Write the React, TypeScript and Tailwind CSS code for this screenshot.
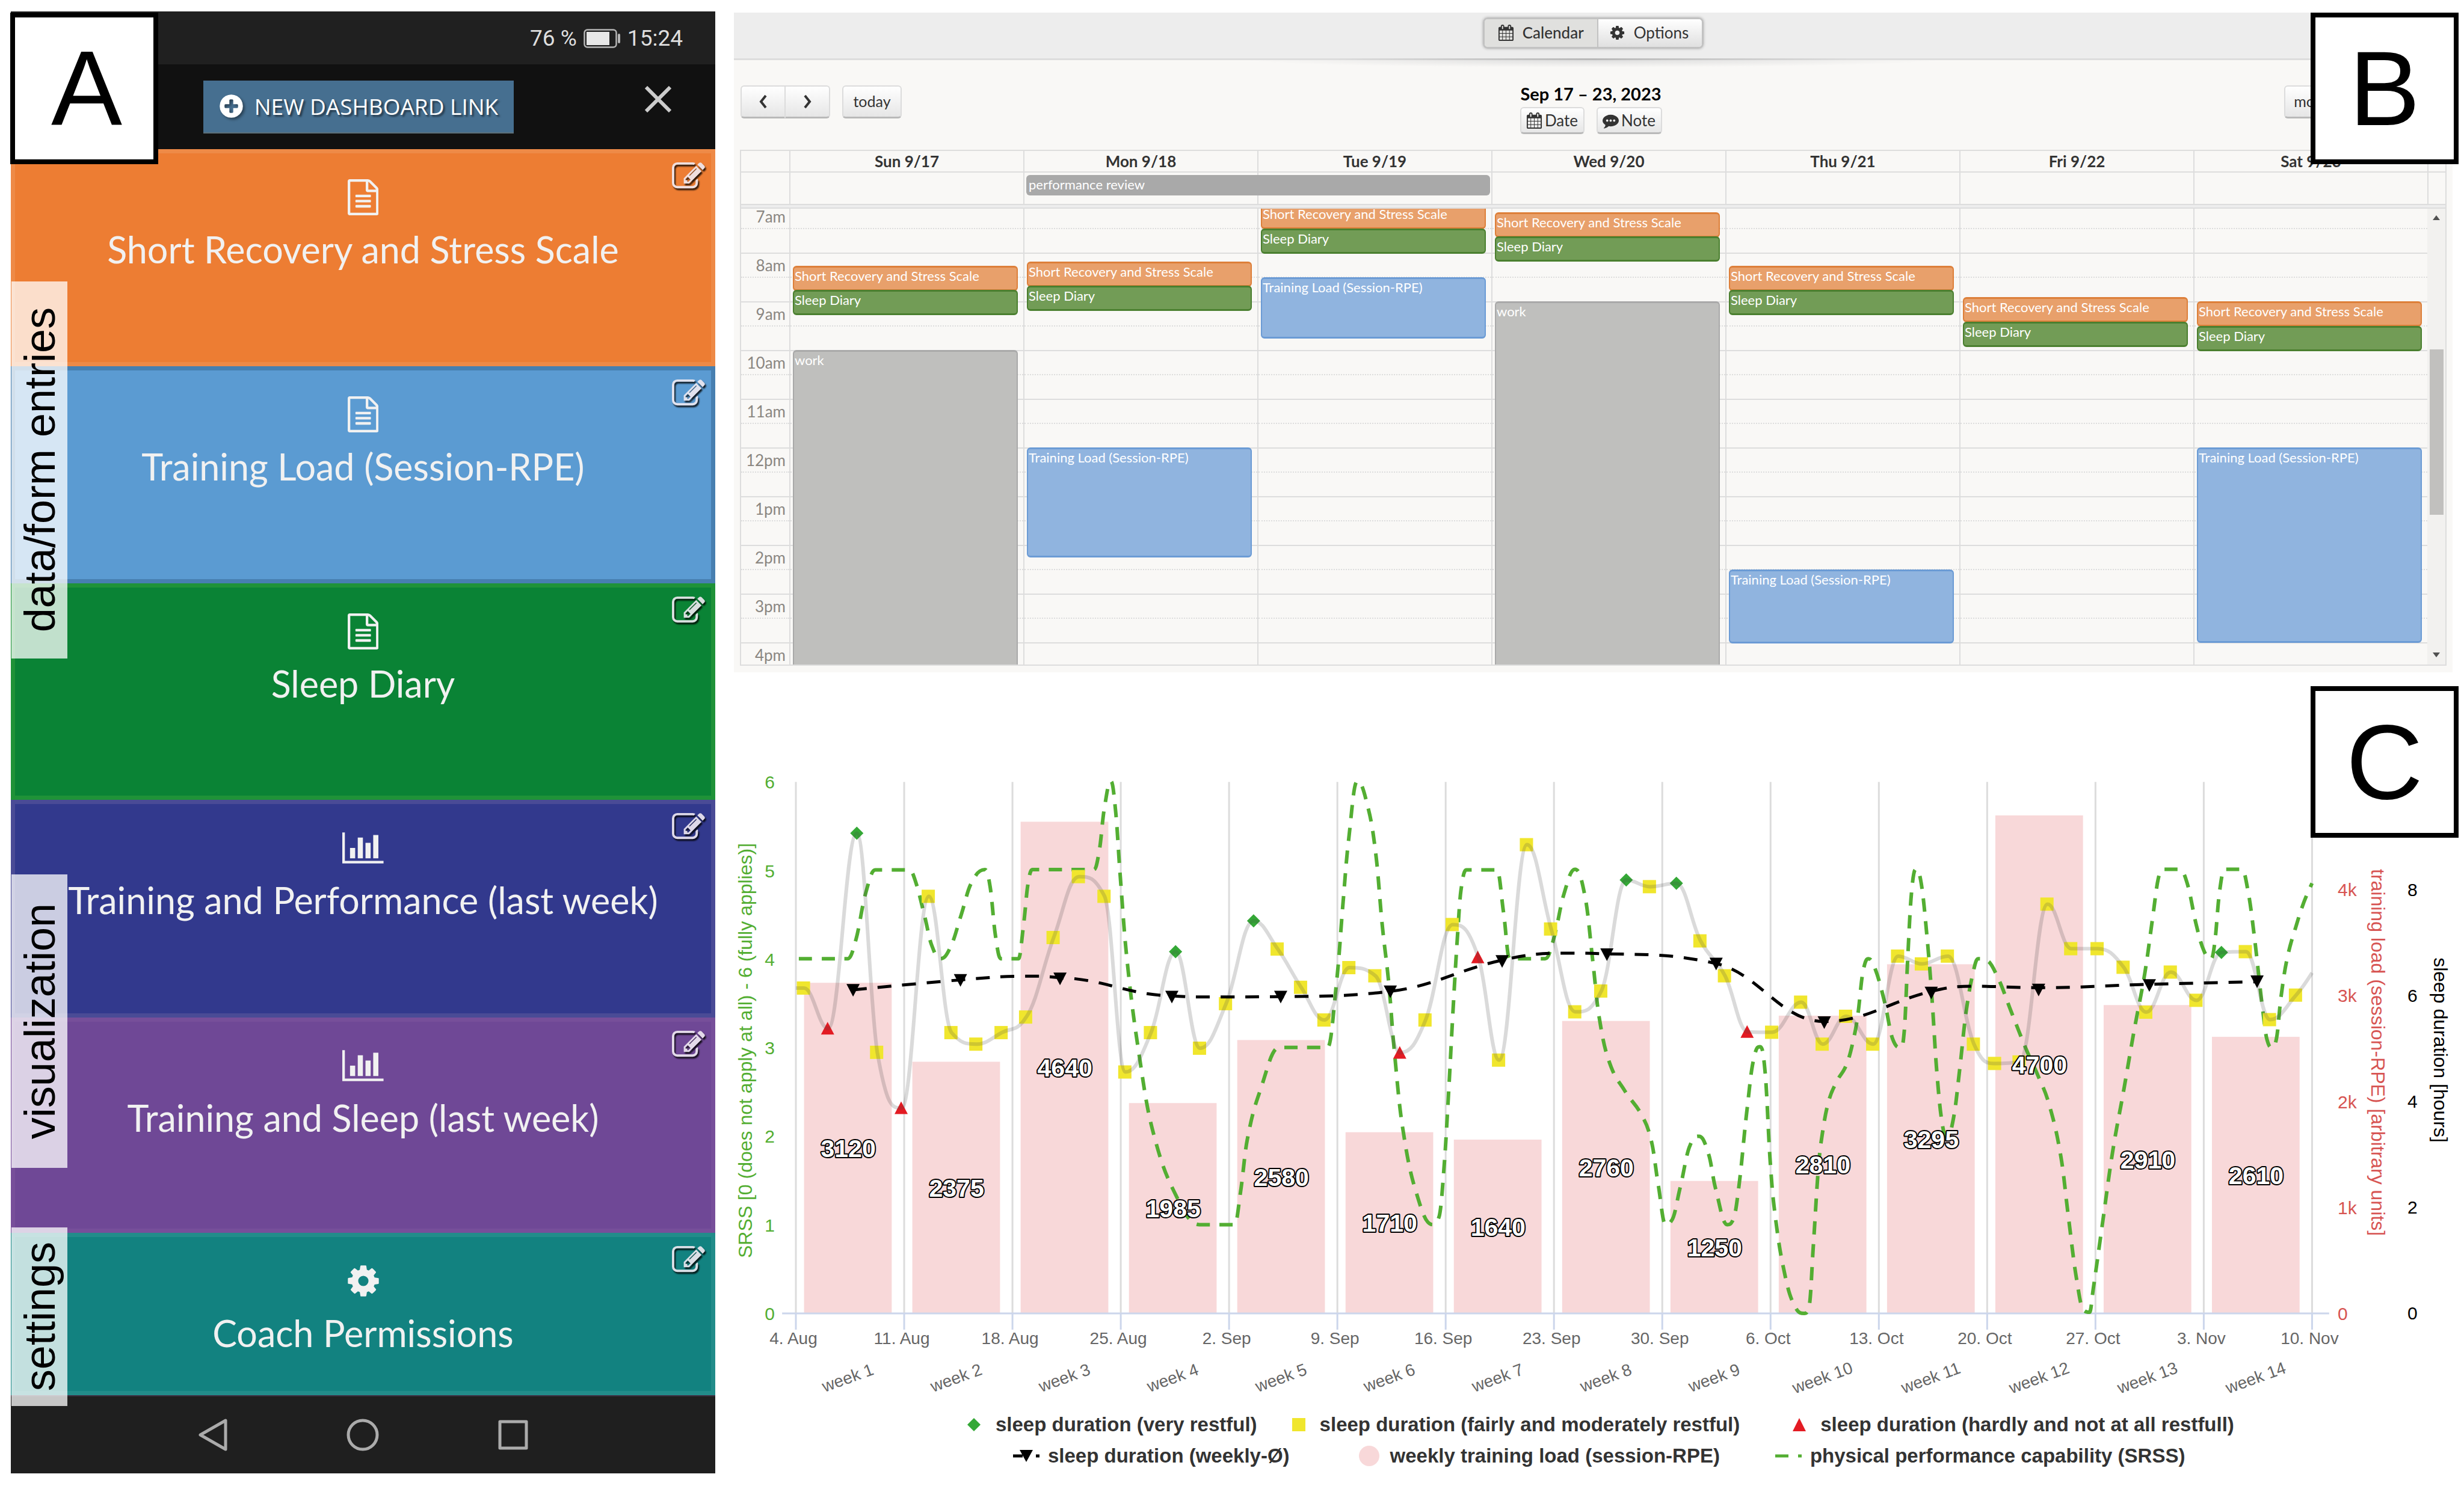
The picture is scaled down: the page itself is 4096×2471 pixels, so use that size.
import React from "react";

/* ---------- icons ---------- */

const FILE_TEXT =
  "M1468 380q28 28 48 76t20 88v1152q0 40-28 68t-68 28h-1344q-40 0-68-28t-28-68v-1600q0-40 28-68t68-28h896q40 0 88 20t76 48zm-444-244v376h376q-10-29-22-41l-313-313q-12-12-41-22zm384 1528v-1024h-416q-40 0-68-28t-28-68v-416h-768v1536h1280zm-1024-864q0-14 9-23t23-9h704q14 0 23 9t9 23v64q0 14-9 23t-23 9h-704q-14 0-23-9t-9-23v-64zm736 224q14 0 23 9t9 23v64q0 14-9 23t-23 9h-704q-14 0-23-9t-9-23v-64q0-14 9-23t23-9h704zm0 256q14 0 23 9t9 23v64q0 14-9 23t-23 9h-704q-14 0-23-9t-9-23v-64q0-14 9-23t23-9h704z";
const BAR_CHART =
  "M640 896v512h-256v-512h256zm384-512v1024h-256v-1024h256zm1024 1152v128h-2048v-1536h128v1408h1920zm-640-896v768h-256v-768h256zm384-384v1152h-256v-1152h256z";
const COG =
  "M1152 896q0-106-75-181t-181-75-181 75-75 181 75 181 181 75 181-75 75-181zm512-109v222q0 12-8 23t-20 13l-185 28q-19 54-39 91 35 50 107 138 10 12 10 25t-9 23q-27 37-99 108t-94 71q-12 0-26-9l-138-108q-44 23-91 38-16 136-29 186-7 28-36 28h-222q-14 0-24.5-8.5t-11.5-21.5l-28-184q-49-16-90-37l-141 107q-10 9-25 9-14 0-25-11-126-114-165-168-7-10-7-23 0-12 8-23 15-21 51-66.5t54-70.5q-27-50-41-99l-183-27q-13-2-21-12.5t-8-23.5v-222q0-12 8-23t19-13l186-28q14-46 39-92-40-57-107-138-10-12-10-24 0-10 9-23 26-36 98.5-107.5t94.5-71.5q13 0 26 10l138 107q44-23 91-38 16-136 29-186 7-28 36-28h222q14 0 24.5 8.5t11.5 21.5l28 184q49 16 90 37l142-107q9-9 24-9 13 0 25 10 129 119 165 170 7 8 7 22 0 12-8 23-15 21-51 66.5t-54 70.5q26 50 41 98l183 28q13 2 21 12.5t8 23.5z";
const EDIT =
  "M888 1184l116-116-152-152-116 116v56h96v96h56zm440-720q-16-16-33 1l-350 350q-17 17-1 33t33-1l350-350q17-17 1-33zm80 594v190q0 119-84.5 203.5t-203.5 84.5h-832q-119 0-203.5-84.5t-84.5-203.5v-832q0-119 84.5-203.5t203.5-84.5h832q63 0 117 25 15 7 18 23 3 17-9 29l-49 49q-14 14-32 8-23-6-45-6h-832q-66 0-113 47t-47 113v832q0 66 47 113t113 47h832q66 0 113-47t47-113v-126q0-13 9-22l64-64q15-15 35-7t20 29zm-96-738l288 288-672 672h-288v-288zm444 132l-92 92-288-288 92-92q28-28 68-28t68 28l152 152q28 28 28 68t-28 68z";
const CALENDAR =
  "M192 1664h288v-288h-288v288zm352 0h320v-288h-320v288zm-352-352h288v-320h-288v320zm352 0h320v-320h-320v320zm-352-384h288v-288h-288v288zm736 736h320v-288h-320v288zm-384-736h320v-288h-320v288zm768 736h288v-288h-288v288zm-384-352h320v-320h-320v320zm-352-864v-288q0-13-9.5-22.5t-22.5-9.5h-64q-13 0-22.5 9.5t-9.5 22.5v288q0 13 9.5 22.5t22.5 9.5h64q13 0 22.5-9.5t9.5-22.5zm736 864h288v-320h-288v320zm-384-384h320v-288h-320v288zm384 0h288v-288h-288v288zm32-480v-288q0-13-9.5-22.5t-22.5-9.5h-64q-13 0-22.5 9.5t-9.5 22.5v288q0 13 9.5 22.5t22.5 9.5h64q13 0 22.5-9.5t9.5-22.5zm384-64v1280q0 52-38 90t-90 38h-1408q-52 0-90-38t-38-90v-1280q0-52 38-90t90-38h128v-96q0-66 47-113t113-47h64q66 0 113 47t47 113v96h384v-96q0-66 47-113t113-47h64q66 0 113 47t47 113v96h128q52 0 90 38t38 90z";
const COMMENT =
  "M640 896q0-53-37.5-90.5t-90.5-37.5-90.5 37.5-37.5 90.5 37.5 90.5 90.5 37.5 90.5-37.5 37.5-90.5zm384 0q0-53-37.5-90.5t-90.5-37.5-90.5 37.5-37.5 90.5 37.5 90.5 90.5 37.5 90.5-37.5 37.5-90.5zm384 0q0-53-37.5-90.5t-90.5-37.5-90.5 37.5-37.5 90.5 37.5 90.5 90.5 37.5 90.5-37.5 37.5-90.5zm384 0q0 174-120 321.5t-326 233-450 85.5q-110 0-211-18-173 173-435 229-52 10-86 13-12 1-22-6t-13-18q-4-15 20-37 5-5 23.5-21.5t25.5-23.5 23.5-25.5 24-31.5 20.5-37 20-48 14.5-57.5 12.5-72.5q-146-90-229.5-216.5t-83.5-269.5q0-174 120-321.5t326-233 450-85.5 450 85.5 326 233 120 321.5z";
const PLUS_CIRCLE =
  "M1344 960v-128q0-26-19-45t-45-19h-256v-256q0-26-19-45t-45-19h-128q-26 0-45 19t-19 45v256h-256q-26 0-45 19t-19 45v128q0 26 19 45t45 19h256v256q0 26 19 45t45 19h128q26 0 45-19t19-45v-256h256q26 0 45-19t19-45zm320-64q0 209-103 385.5t-279.5 279.5-385.5 103-385.5-103-279.5-279.5-103-385.5 103-385.5 279.5-279.5 385.5-103 385.5 103 279.5 279.5 103 385.5z";

function Icon({ d, width = 1792, className }: { d: string; width?: number; className: string }) {
  return (
    <svg viewBox={`0 0 ${width} 1792`} fill="currentColor" aria-hidden="true" className={className}>
      <path d={d} />
    </svg>
  );
}

/* ---------- shared ---------- */

function PanelLetter({ letter, className }: { letter: string; className: string }) {
  return (
    <div
      className={
        "absolute z-20 flex h-[252px] w-[246px] items-center justify-center border-8 border-black bg-white font-['Liberation_Sans',sans-serif] text-[177px] leading-none text-black " +
        className
      }
    >
      {letter}
    </div>
  );
}

/* ---------- phone dashboard ---------- */

type Tile = { title: string; icon: string; iconWidth: number; className: string };

const TILES: Tile[] = [
  { title: "Short Recovery and Stress Scale", icon: FILE_TEXT, iconWidth: 1536, className: "bg-[#ed7d33] border-[#ee8a47]" },
  { title: "Training Load (Session-RPE)", icon: FILE_TEXT, iconWidth: 1536, className: "bg-[#5b9bd2] border-[#477fb0]" },
  { title: "Sleep Diary", icon: FILE_TEXT, iconWidth: 1536, className: "bg-[#0a8335] border-[#1f9238]" },
  { title: "Training and Performance (last week)", icon: BAR_CHART, iconWidth: 2048, className: "bg-[#32398d] border-[#4a4b96]" },
  { title: "Training and Sleep (last week)", icon: BAR_CHART, iconWidth: 2048, className: "bg-[#6f4896] border-[#774f9a]" },
  { title: "Coach Permissions", icon: COG, iconWidth: 1792, className: "bg-[#128280] border-[#228c8a]" },
];

function DashboardTile({ tile }: { tile: Tile }) {
  return (
    <section className={"relative flex flex-col items-center border-[7px] pt-[43px] text-[#f1f1f1] " + tile.className}>
      <Icon d={tile.icon} width={tile.iconWidth} className="h-[60px]" />
      <h2 className="mt-[17px] whitespace-nowrap text-[61px] leading-[80px]">{tile.title}</h2>
      <button
        type="button"
        aria-label={`Edit ${tile.title}`}
        className="absolute right-[10px] top-[11px] text-[#f0eaf2] opacity-90"
      >
        <Icon d={EDIT} className="size-[55px] drop-shadow-[2px_3px_1px_rgba(0,0,0,0.9)]" />
      </button>
    </section>
  );
}

function SideLabel({ text, className }: { text: string; className: string }) {
  return (
    <div className={"absolute left-px z-10 flex w-[93px] items-center justify-center bg-white/75 " + className}>
      <span className="rotate-180 whitespace-nowrap font-['Liberation_Sans',sans-serif] text-[72px] leading-none text-black [writing-mode:vertical-rl]">
        {text}
      </span>
    </div>
  );
}

function Phone() {
  return (
    <div className="relative flex flex-col bg-[#111] font-[Lato,sans-serif]">
      <PanelLetter letter="A" className="-left-px top-[2px] pl-2" />
      <div className="flex h-[88px] items-center justify-end gap-[11px] bg-[#202020] pr-[54px] pt-px font-[Roboto,sans-serif] text-[37px] text-[#dedede]">
        <span>76 %</span>
        <svg viewBox="0 0 62 32" className="h-8 w-[62px]" aria-hidden="true">
          <rect x="1.5" y="1.5" width="53" height="29" rx="5" fill="none" stroke="#b5b5b5" strokeWidth="2.5" />
          <rect x="5" y="5" width="38" height="22" fill="#e8e8e8" />
          <rect x="57" y="8" width="4" height="16" rx="2" fill="#b5b5b5" />
        </svg>
        <span>15:24</span>
      </div>
      <div className="relative flex h-[141px] items-center justify-center pr-[15px]">
        <button
          type="button"
          className="flex h-[88px] items-center gap-4 whitespace-nowrap border-b-2 border-[#5c7079] bg-[#466f90] pl-6 pr-[26px] font-['Open_Sans',sans-serif] text-[37px] text-white [text-shadow:3px_3px_3px_rgba(0,0,0,0.5)]"
        >
          <Icon d={PLUS_CIRCLE} className="size-[45px] drop-shadow-[3px_3px_2px_rgba(0,0,0,0.4)]" />
          NEW DASHBOARD LINK
        </button>
        <button type="button" aria-label="Close" className="absolute right-[73px] top-[36px] text-[#cccccc]">
          <svg viewBox="0 0 44 44" className="size-11" fill="none" stroke="currentColor" strokeWidth="6" aria-hidden="true">
            <path d="M2 2L42 42M42 2L2 42" />
          </svg>
        </button>
      </div>
      <div className="grid flex-1 grid-rows-[361fr_361fr_361fr_362fr_358fr_270fr]">
        {TILES.map((t) => (
          <DashboardTile key={t.title} tile={t} />
        ))}
      </div>
      <nav className="flex h-[130px] items-center justify-center gap-[198px] border-t-2 border-[#3d2f42] bg-[#1f1f1f] text-[#ababab]">
        <button type="button" aria-label="Back">
          <svg viewBox="0 0 48 54" className="h-[54px] w-12" fill="none" stroke="currentColor" strokeWidth="5" strokeLinejoin="round" aria-hidden="true">
            <path d="M45 3V51L3 27Z" />
          </svg>
        </button>
        <button type="button" aria-label="Home">
          <svg viewBox="0 0 54 54" className="size-[54px]" fill="none" stroke="currentColor" strokeWidth="5" aria-hidden="true">
            <circle cx="27" cy="27" r="24" />
          </svg>
        </button>
        <button type="button" aria-label="Recent apps">
          <svg viewBox="0 0 50 50" className="size-[50px]" fill="none" stroke="currentColor" strokeWidth="5" strokeLinejoin="round" aria-hidden="true">
            <rect x="3" y="3" width="44" height="44" />
          </svg>
        </button>
      </nav>
      <SideLabel text="data/form entries" className="top-[449px] h-[627px]" />
      <SideLabel text="visualization" className="top-[1435px] h-[488px]" />
      <SideLabel text="settings" className="top-[2022px] h-[297px]" />
    </div>
  );
}

/* ---------- calendar ---------- */

type Kind = "stress" | "sleep" | "training" | "work";
type Entry = { kind: Kind; start: number; length: number };
type Day = { name: string; entries: Entry[] };

const KIND: Record<Kind, { label: string; className: string }> = {
  stress: { label: "Short Recovery and Stress Scale", className: "bg-[#e8a06b] border-[#dd7f39]" },
  sleep: { label: "Sleep Diary", className: "bg-[#729c56] border-[#4a7f2f]" },
  training: { label: "Training Load (Session-RPE)", className: "bg-[#90b4df] border-[#6b9bd5]" },
  work: { label: "work", className: "bg-[#bfbfbd] border-[#a9a9a9]" },
};

/* entry times in minutes after 7am */
const morning = (start: number): Entry[] => [
  { kind: "stress", start, length: 30 },
  { kind: "sleep", start: start + 30, length: 30 },
];

const DAYS: Day[] = [
  { name: "Sun 9/17", entries: [...morning(76), { kind: "work", start: 180, length: 480 }] },
  { name: "Mon 9/18", entries: [...morning(71), { kind: "training", start: 300, length: 135 }] },
  { name: "Tue 9/19", entries: [...morning(0), { kind: "training", start: 90, length: 75 }] },
  { name: "Wed 9/20", entries: [...morning(10), { kind: "work", start: 120, length: 480 }] },
  { name: "Thu 9/21", entries: [...morning(76), { kind: "training", start: 450, length: 90 }] },
  { name: "Fri 9/22", entries: [...morning(115)] },
  { name: "Sat 9/23", entries: [...morning(120), { kind: "training", start: 300, length: 240 }] },
];

const HOURS = ["7am", "8am", "9am", "10am", "11am", "12pm", "1pm", "2pm", "3pm", "4pm"];
const HOUR_PX = 81;

const BUTTON =
  "flex items-center justify-center border-2 border-b-[3px] border-[#dcdcdc] border-b-[#b9b9b9] bg-linear-to-b from-white to-[#e6e6e6] text-[#333] ";

function SlotLines() {
  return (
    <>
      {HOURS.map((h) => (
        <div key={h} className="h-[81px] border-t-2 border-[#dddddd] pt-[38px]">
          <div className="border-t-2 border-dotted border-[#dddddd]" />
        </div>
      ))}
    </>
  );
}

function Calendar() {
  return (
    <section className="relative bg-[#f9f8f6] font-[Lato,sans-serif]">
      <PanelLetter letter="B" className="-right-[10px] top-0" />
      <div className="flex h-[76px] items-center justify-center bg-[#ededed] pb-[9px]">
        <div className="flex overflow-hidden rounded-lg border-[3px] border-[#c2c2c2] text-[26px] text-[#333] shadow-[0_0_4px_rgba(0,0,0,0.25)]">
          <button type="button" className="flex h-[46px] items-center gap-[14px] border-r-2 border-[#c2c2c2] bg-[#e0e0de] pl-[22px] pr-[22px] font-medium">
            <Icon d={CALENDAR} className="size-[27px]" />
            Calendar
          </button>
          <button type="button" className="flex h-[46px] items-center gap-[14px] bg-linear-to-b from-white to-[#e0e0e0] pl-[18px] pr-[22px]">
            <Icon d={COG} className="size-[27px]" />
            Options
          </button>
        </div>
      </div>
      <div className="h-[3px] bg-linear-to-r from-[#dddddd] from-35% via-[#b8b8b8] to-[#dddddd] to-65%" />
      <div className="mx-auto h-3 w-2/5 bg-[radial-gradient(50%_100%_at_50%_0%,#dedede,transparent)]" />
      <div className="grid h-[137px] grid-cols-3 px-[11px] text-[25px]">
        <div className="flex gap-5 pt-[30px]">
          <div className="flex">
            <button type="button" aria-label="Previous week" className={BUTTON + "h-[55px] w-[74px] rounded-l-md border-r-[1px]"}>
              <svg viewBox="0 0 16 24" className="h-6 w-4" fill="none" stroke="currentColor" strokeWidth="4" aria-hidden="true">
                <path d="M12 2L4 12L12 22" />
              </svg>
            </button>
            <button type="button" aria-label="Next week" className={BUTTON + "h-[55px] w-[75px] rounded-r-md border-l-[1px]"}>
              <svg viewBox="0 0 16 24" className="h-6 w-4" fill="none" stroke="currentColor" strokeWidth="4" aria-hidden="true">
                <path d="M4 2L12 12L4 22" />
              </svg>
            </button>
          </div>
          <button type="button" className={BUTTON + "h-[55px] w-[99px] rounded-md"}>
            today
          </button>
        </div>
        <div className="flex flex-col items-center pr-2 pt-[24px]">
          <h2 className="h-[42px] whitespace-nowrap text-[29px] font-bold leading-[40px] text-black">Sep 17 – 23, 2023</h2>
          <div className="flex gap-5">
            <button type="button" className={BUTTON + "h-[45px] w-[107px] gap-1 rounded-md text-[26px]"}>
              <Icon d={CALENDAR} className="size-[27px]" />
              Date
            </button>
            <button type="button" className={BUTTON + "h-[45px] w-[109px] gap-1 rounded-md text-[26px]"}>
              <Icon d={COMMENT} className="size-[27px]" />
              Note
            </button>
          </div>
        </div>
        <div className="flex justify-end pr-[165px] pt-[30px]">
          <button type="button" className={BUTTON + "h-[55px] w-[104px] rounded-l-md"}>
            month
          </button>
        </div>
      </div>
      <div className="px-[10px] pb-[11px]">
        <table className="w-full table-fixed border-separate border-spacing-0 border-2 border-[#dddddd]">
          <colgroup>
            <col className="w-[80px]" />
            {DAYS.map((d) => (
              <col key={d.name} />
            ))}
            <col className="w-[30px]" />
          </colgroup>
          <thead>
            <tr className="h-[36px] text-[26px] text-[#333]">
              <th className="border-b-2 border-[#dddddd] p-0" />
              {DAYS.map((d) => (
                <th key={d.name} scope="col" className="whitespace-nowrap border-b-2 border-l-2 border-[#dddddd] p-0 font-bold leading-[34px]">
                  {d.name}
                </th>
              ))}
              <th className="border-b-2 border-l-2 border-[#dddddd] p-0" />
            </tr>
          </thead>
          <tbody>
            <tr className="h-[52px]">
              <td className="p-0" />
              {DAYS.map((d, i) => (
                <td key={d.name} className="relative border-l-2 border-[#dddddd] p-0">
                  {i === 1 && (
                    <div className="absolute left-[3px] top-1 z-10 h-[34px] w-[calc(200%-3px)] rounded-md bg-[#a9a9a9] pl-1 text-[22px] leading-[32px] text-white">
                      performance review
                    </div>
                  )}
                </td>
              ))}
              <td className="border-l-2 border-[#dddddd] p-0" />
            </tr>
            <tr className="h-2">
              <td colSpan={9} className="border-y-2 border-[#dddddd] bg-[#ededed] p-0" />
            </tr>
            <tr>
              <td className="p-0">
                <div className="relative h-[758px] overflow-hidden">
                  <div className="-mt-2">
                    <SlotLines />
                  </div>
                  <div className="absolute inset-x-0 top-0 -mt-2 pr-[6px] text-right text-[26px] text-[#8a8681]">
                    {HOURS.map((h) => (
                      <div key={h} className="h-[81px] pt-[9px] leading-[24px]">
                        {h}
                      </div>
                    ))}
                  </div>
                </div>
              </td>
              {DAYS.map((d) => (
                <td key={d.name} className="border-l-2 border-[#dddddd] p-0">
                  <div className="relative h-[758px] overflow-hidden">
                    <div className="-mt-2">
                      <SlotLines />
                    </div>
                    <div className="absolute inset-x-0 top-0 -mt-2">
                      {d.entries.map((e) => (
                        <div
                          key={e.kind}
                          className={
                            "absolute left-1 right-[9px] overflow-hidden whitespace-nowrap rounded-md border-2 border-y-[3px] pl-px text-[22px] leading-[28px] text-white " +
                            KIND[e.kind].className
                          }
                          style={{ top: Math.round((e.start * HOUR_PX) / 60), height: Math.round((e.length * HOUR_PX) / 60) + 1 }}
                        >
                          {KIND[e.kind].label}
                        </div>
                      ))}
                    </div>
                  </div>
                </td>
              ))}
              <td className="bg-[#f2f1ef] p-0">
                <div className="flex h-[758px] flex-col items-center">
                  <svg viewBox="0 0 12 8" className="mt-[11px] h-2 w-3" fill="#505050" aria-hidden="true">
                    <path d="M0 8L6 0L12 8Z" />
                  </svg>
                  <div className="mt-[215px] h-[275px] w-[23px] bg-[#c1c0be]" />
                  <svg viewBox="0 0 12 8" className="mb-3 mt-auto h-2 w-3" fill="#505050" aria-hidden="true">
                    <path d="M0 0L6 8L12 0Z" />
                  </svg>
                </div>
              </td>
            </tr>
          </tbody>
        </table>
      </div>
    </section>
  );
}

/* ---------- chart ---------- */

type Pt = [number, number];

/* Series are stored on a fine grid: 291.5 units per week, 238.5 units per scale point. */
const GRID_LEFT = 183;
const GRID_BOTTOM = 1498;
const WEEK = 291.5;
const LEVEL = 238.5;
const SCALE = 0.6176;
const X0 = 103;
const Y0 = 894;
const LOAD = 0.2853;

const sx = (u: number) => X0 + (u - GRID_LEFT) * SCALE;
const sy = (u: number) => Y0 + (u - GRID_BOTTOM) * SCALE;

type Mark = "s" | "d" | "t";
const SLEEP: [number, number, Mark?][] = [
  [183, 622], [205, 622, "s"], [270, 731, "t"], [347, 205, "d"], [402, 795, "s"], [468, 945, "t"], [541, 375, "s"],
  [602, 742, "s"], [669, 773, "s"], [737, 742, "s"], [803, 700, "s"], [877, 486, "s"], [945, 322, "s"], [1014, 375, "s"],
  [1070, 848, "s"], [1139, 742, "s"], [1205, 524, "d"], [1271, 784, "s"], [1341, 664, "s"], [1415, 441, "d"], [1480, 517, "s"],
  [1543, 620, "s"], [1606, 708, "s"], [1673, 567, "s"], [1743, 589, "s"], [1810, 796, "t"], [1878, 708, "s"], [1951, 451, "s"],
  [2020, 539, "t"], [2076, 816, "s"], [2151, 236, "s"], [2216, 463, "s"], [2281, 686, "s"], [2351, 630, "s"], [2418, 331, "d"],
  [2482, 349, "s"], [2553, 340, "d"], [2618, 495, "s"], [2684, 589, "s"], [2745, 740, "t"], [2811, 741, "s"], [2889, 660, "s"],
  [2947, 773, "s"], [3010, 698, "s"], [3083, 773, "s"], [3150, 536, "s"], [3214, 557, "s"], [3284, 536, "s"], [3354, 773, "s"],
  [3411, 825, "s"], [3477, 821, "s"], [3552, 396, "s"], [3616, 516, "s"], [3687, 516, "s"], [3757, 566, "s"], [3818, 687, "s"],
  [3884, 579, "s"], [3953, 655, "s"], [4020, 526, "d"], [4086, 524, "s"], [4151, 707, "s"], [4221, 641, "s"], [4264, 581],
];

const WEEKLY: Pt[] = [
  [337, 627], [626, 600], [800, 590], [894, 594], [1195, 643], [1300, 646], [1488, 645], [1782, 631], [2083, 547], [2250, 528],
  [2365, 530], [2660, 556], [2950, 712], [3239, 631], [3350, 617], [3528, 621], [3826, 612], [4116, 605],
];
const WEEKLY_MARKS: Pt[] = [
  [337, 629], [626, 602], [894, 598], [1195, 647], [1488, 647], [1783, 633], [2084, 551], [2366, 533], [2660, 558], [2951, 716],
  [3239, 636], [3528, 628], [3826, 616], [4116, 606],
];

const SRSS: Pt[] = [
  [191, 543], [258, 543], [322, 543], [345, 490], [370, 370], [397, 304], [488, 304], [505, 335], [530, 430], [548, 505], [572, 543],
  [600, 510], [628, 425], [655, 340], [692, 303], [706, 350], [720, 480], [735, 543], [782, 543], [796, 450], [808, 340], [820, 303],
  [985, 303], [1000, 250], [1013, 140], [1031, 65], [1044, 150], [1056, 320], [1074, 543], [1104, 782], [1142, 1000], [1206, 1180],
  [1270, 1259], [1364, 1259], [1380, 1170], [1398, 1030], [1432, 900], [1484, 782], [1614, 782], [1639, 600], [1656, 390], [1670, 230],
  [1694, 65], [1724, 140], [1745, 270], [1761, 450], [1779, 610], [1793, 782], [1815, 990], [1852, 1170], [1897, 1259], [1915, 1235],
  [1928, 1100], [1939, 920], [1953, 660], [1964, 480], [1973, 360], [1988, 304], [2070, 304], [2088, 420], [2104, 543], [2200, 543],
  [2224, 485], [2250, 370], [2280, 302], [2308, 380], [2328, 550], [2345, 700], [2372, 820], [2415, 900], [2460, 965], [2486, 1035],
  [2504, 1150], [2524, 1259], [2540, 1248], [2563, 1160], [2590, 1045], [2614, 1021], [2640, 1070], [2658, 1160], [2690, 1259],
  [2706, 1245], [2722, 1150], [2742, 960], [2762, 810], [2778, 780], [2792, 850], [2805, 1080], [2816, 1210], [2840, 1370],
  [2870, 1475], [2897, 1498], [2910, 1480], [2922, 1310], [2935, 1110], [2945, 1020], [2962, 930], [2984, 875], [3012, 825],
  [3032, 750], [3042, 690], [3055, 580], [3070, 543], [3088, 570], [3114, 662], [3135, 759], [3157, 782], [3166, 742], [3176, 535],
  [3186, 363], [3198, 302], [3212, 340], [3227, 478], [3241, 650], [3253, 834], [3268, 984], [3282, 1022], [3299, 972], [3315, 846],
  [3333, 685], [3354, 570], [3366, 543], [3387, 547], [3418, 593], [3454, 685], [3495, 788], [3526, 857], [3557, 938], [3588, 1076],
  [3608, 1237], [3629, 1398], [3650, 1490], [3665, 1495], [3675, 1432], [3701, 1248], [3727, 1064], [3758, 892], [3784, 742],
  [3814, 581], [3835, 432], [3850, 328], [3863, 302], [3907, 302], [3928, 340], [3953, 455], [3974, 524], [3992, 543], [4002, 501],
  [4015, 363], [4029, 302], [4075, 302], [4092, 363], [4108, 478], [4129, 662], [4144, 765], [4157, 782], [4168, 759], [4180, 650],
  [4196, 547], [4221, 455], [4242, 391], [4264, 340],
];

const LOADS = [3120, 2375, 4640, 1985, 2580, 1710, 1640, 2760, 1250, 2810, 3295, 4700, 2910, 2610];
const DATES = [
  "4. Aug", "11. Aug", "18. Aug", "25. Aug", "2. Sep", "9. Sep", "16. Sep", "23. Sep", "30. Sep", "6. Oct", "13. Oct", "20. Oct",
  "27. Oct", "3. Nov", "10. Nov",
];

/* Smooth path that never overshoots its neighbouring points. */
function spline(points: Pt[]): string {
  const p = points.map(([x, y]) => [sx(x), sy(y)] as Pt);
  let out = `M${p[0][0].toFixed(1)} ${p[0][1].toFixed(1)}`;
  let prevRight: Pt = p[0];
  for (let i = 1; i < p.length; i++) {
    const [x, y] = p[i];
    const [lx, ly] = p[i - 1];
    let left: Pt = [x, y];
    let right: Pt = [x, y];
    if (i < p.length - 1) {
      const [nx, ny] = p[i + 1];
      const lcx = (1.5 * x + lx) / 2.5;
      let lcy = (1.5 * y + ly) / 2.5;
      const rcx = (1.5 * x + nx) / 2.5;
      let rcy = (1.5 * y + ny) / 2.5;
      const fix = ((rcy - lcy) * (rcx - x)) / (rcx - lcx) + y - rcy;
      lcy += fix;
      rcy += fix;
      if (lcy > ly && lcy > y) {
        lcy = Math.max(ly, y);
        rcy = 2 * y - lcy;
      } else if (lcy < ly && lcy < y) {
        lcy = Math.min(ly, y);
        rcy = 2 * y - lcy;
      }
      if (rcy > ny && rcy > y) {
        rcy = Math.max(ny, y);
        lcy = 2 * y - rcy;
      } else if (rcy < ny && rcy < y) {
        rcy = Math.min(ny, y);
        lcy = 2 * y - rcy;
      }
      left = [lcx, lcy];
      right = [rcx, rcy];
    }
    out += `C${prevRight[0].toFixed(1)} ${prevRight[1].toFixed(1)} ${left[0].toFixed(1)} ${left[1].toFixed(1)} ${x.toFixed(1)} ${y.toFixed(1)}`;
    prevRight = right;
  }
  return out;
}

function Marker({ kind, x, y }: { kind: Mark; x: number; y: number }) {
  if (kind === "s") return <rect x={x - 12} y={y - 11} width="22" height="22" fill="#f0e62d" />;
  if (kind === "d") return <path d={`M${x} ${y - 11}l11 11l-11 11l-11 -11z`} fill="#34a836" />;
  return <path d={`M${x - 1} ${y - 11}l11 21h-22z`} fill="#e31b23" />;
}

function Plot() {
  const weeks = LOADS.map((_, i) => i);
  return (
    <svg
      viewBox="0 0 2857 1050"
      role="img"
      aria-label="Weekly training load, sleep duration and performance capability"
      className="block h-auto w-full font-['Liberation_Sans',Arial,sans-serif]"
    >
      {DATES.map((d, i) => {
        const x = sx(GRID_LEFT + i * WEEK);
        return (
          <g key={d}>
            <path d={`M${x} ${sy(67)}V${Y0}`} stroke="#dcdcdc" strokeWidth="3" />
            <path d={`M${x} ${Y0}v27`} stroke="#ccd6eb" strokeWidth="3" />
          </g>
        );
      })}
      {weeks.map((i) => {
        const h = LOADS[i] * LOAD * SCALE;
        return <rect key={i} x={sx(GRID_LEFT + 22 + i * WEEK)} y={Y0 - h} width={236 * SCALE} height={h} fill="#f8d8d9" />;
      })}
      <path d={`M${sx(146)} ${Y0}H${sx(4310)}`} stroke="#ccd6eb" strokeWidth="3" />
      <path d={spline(SRSS)} fill="none" stroke="#53ae32" strokeWidth="6" strokeDasharray="22 16" />
      {SLEEP.map(([x, y, m]) => m && <Marker key={x} kind={m} x={sx(x)} y={sy(y)} />)}
      <path
        d={spline(SLEEP.map(([x, y]) => [x, y] as Pt))}
        fill="none"
        stroke="#444"
        strokeOpacity="0.2"
        strokeWidth="6"
      />
      <path d={spline(WEEKLY)} fill="none" stroke="#000" strokeWidth="5" strokeDasharray="23 18" />
      {WEEKLY_MARKS.map(([x, y]) => (
        <path key={x} d={`M${sx(x) - 11} ${sy(y) - 11}h22l-11 21z`} fill="#000" />
      ))}
      {weeks.map((i) => (
        <text
          key={i}
          x={sx(GRID_LEFT + 141 + i * WEEK)}
          y={Y0 - (LOADS[i] * LOAD * SCALE) / 2 + 15}
          textAnchor="middle"
          fill="#fff"
          stroke="#000"
          strokeWidth="4"
          strokeLinejoin="round"
          paintOrder="stroke"
          className="text-[41px] font-bold"
        >
          {LOADS[i]}
        </text>
      ))}

      <g fill="#53ae32" className="text-[30px]">
        {[0, 1, 2, 3, 4, 5, 6].map((n) => (
          <text key={n} x="68" y={Y0 - n * LEVEL * SCALE + 11} textAnchor="end">
            {n}
          </text>
        ))}
      </g>
      <text transform="translate(30 457) rotate(-90)" textAnchor="middle" fill="#53ae32" className="text-[32px]">
        SRSS [0 (does not apply at all) - 6 (fully applies)]
      </text>
      <g fill="#d75452" className="text-[30px]">
        {["0", "1k", "2k", "3k", "4k"].map((s, n) => (
          <text key={s} x="2666" y={Y0 - n * 1000 * LOAD * SCALE + 11}>
            {s}
          </text>
        ))}
      </g>
      <text transform="translate(2722 460) rotate(90)" textAnchor="middle" fill="#d75452" className="text-[32px]">
        training load (session-RPE) [arbitrary units]
      </text>
      <g fill="#000" className="text-[30px]">
        {[0, 2, 4, 6, 8].map((n) => (
          <text key={n} x="2782" y={Y0 - n * 88 + 10}>
            {n}
          </text>
        ))}
      </g>
      <text transform="translate(2826 456) rotate(90)" textAnchor="middle" fill="#000" className="text-[32px]">
        sleep duration [hours]
      </text>

      <g fill="#666" className="text-[28px]">
        {DATES.map((d, i) => (
          <text key={d} x={sx(GRID_LEFT + i * WEEK) - 4} y="945" textAnchor="middle">
            {d}
          </text>
        ))}
        {weeks.map((i) => (
          <text key={i} transform={`translate(${sx(GRID_LEFT + 145 + i * WEEK)} 1010) rotate(-20)`} textAnchor="middle">
            {`week ${i + 1}`}
          </text>
        ))}
      </g>
    </svg>
  );
}

function Legend() {
  return (
    <ul className="mt-[3px] flex flex-col whitespace-nowrap font-['Liberation_Sans',Arial,sans-serif] text-[33px] font-bold leading-[52px] text-[#333]">
      <li className="flex pl-[388px]">
        <span className="flex items-center gap-[25px]">
          <svg viewBox="0 0 22 22" className="size-[22px]" aria-hidden="true">
            <path d="M11 0L22 11L11 22L0 11Z" fill="#34a836" />
          </svg>
          sleep duration (very restful)
        </span>
        <span className="ml-[58px] flex items-center gap-6">
          <svg viewBox="0 0 22 22" className="size-[22px]" aria-hidden="true">
            <rect width="22" height="22" fill="#f0e62d" />
          </svg>
          sleep duration (fairly and moderately restful)
        </span>
        <span className="ml-[88px] flex items-center gap-6">
          <svg viewBox="0 0 22 22" className="size-[22px]" aria-hidden="true">
            <path d="M11 0L22 22H0Z" fill="#e31b23" />
          </svg>
          sleep duration (hardly and not at all restfull)
        </span>
      </li>
      <li className="flex pl-[464px]">
        <span className="flex items-center gap-3">
          <svg viewBox="0 0 46 22" className="h-[22px] w-[46px]" aria-hidden="true">
            <path d="M0 11H16M38 11H44" stroke="#000" strokeWidth="5" />
            <path d="M11 1H33L22 21Z" fill="#000" />
          </svg>
          sleep duration (weekly-Ø)
        </span>
        <span className="ml-[115px] flex items-center gap-[18px]">
          <svg viewBox="0 0 34 34" className="size-[34px]" aria-hidden="true">
            <circle cx="17" cy="17" r="17" fill="#f8d8d9" />
          </svg>
          weekly training load (session-RPE)
        </span>
        <span className="ml-[92px] flex items-center gap-3">
          <svg viewBox="0 0 46 22" className="h-[22px] w-[46px]" aria-hidden="true">
            <path d="M0 11H22M38 11H44" stroke="#53ae32" strokeWidth="5" />
          </svg>
          physical performance capability (SRSS)
        </span>
      </li>
    </ul>
  );
}

function ChartPanel() {
  return (
    <section className="relative pt-[172px]">
      <PanelLetter letter="C" className="-right-[10px] top-[23px]" />
      <Plot />
      <Legend />
    </section>
  );
}

export default function App() {
  return (
    <main className="grid min-h-screen grid-cols-[1171fr_2857fr] gap-x-[31px] bg-white pb-[21px] pl-[18px] pr-[19px] pt-[19px]">
      <Phone />
      <div className="pt-[2px]">
        <Calendar />
        <ChartPanel />
      </div>
    </main>
  );
}
